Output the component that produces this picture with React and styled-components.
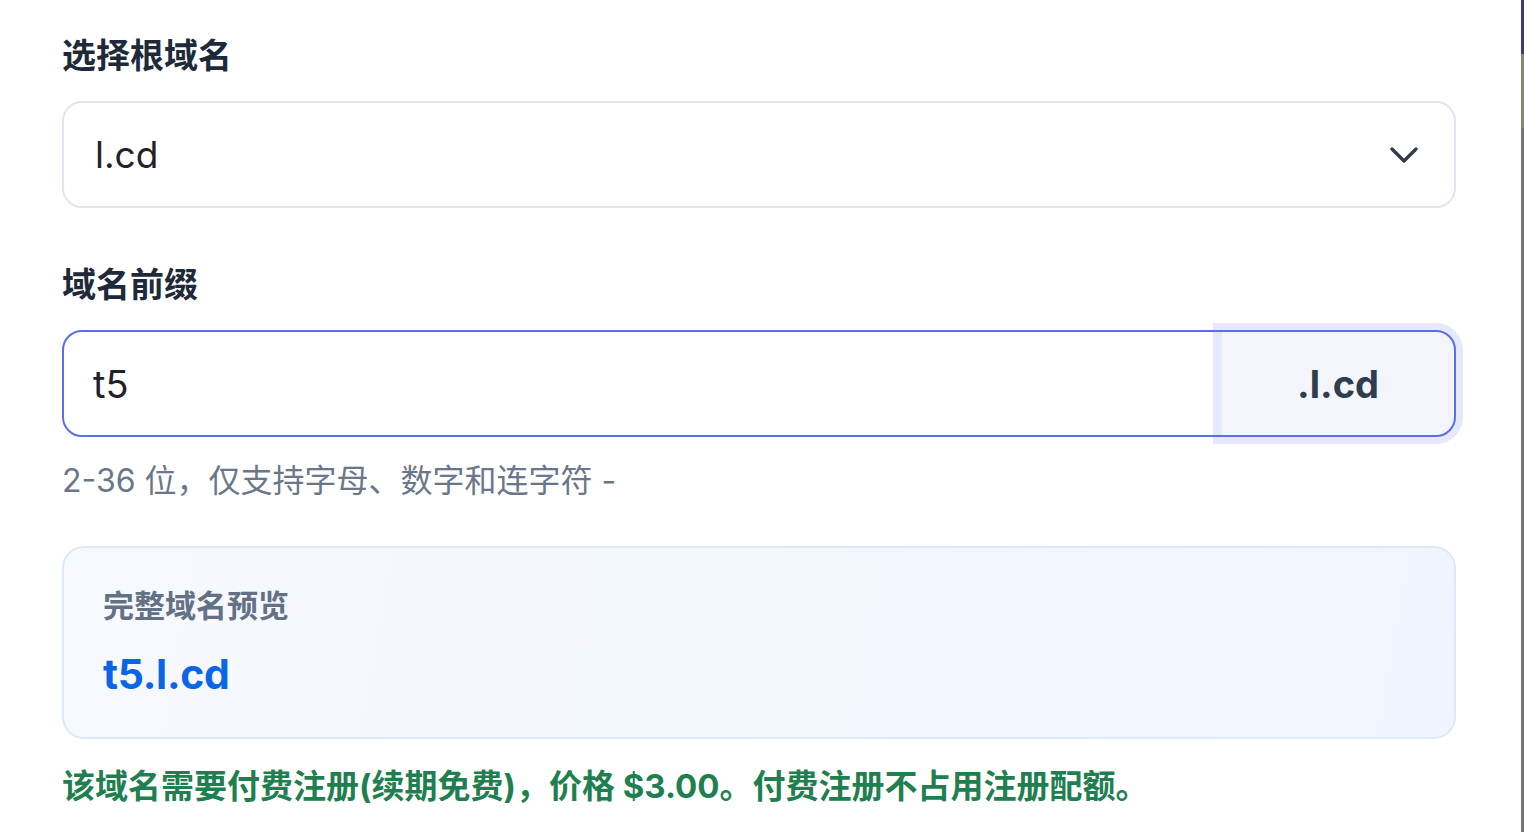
import React, { useState } from 'react';
import styled, { createGlobalStyle } from 'styled-components';

const GlobalStyle = createGlobalStyle`
  html, body {
    margin: 0;
    padding: 0;
    background: #ffffff;
  }
  body {
    font-family: Inter, "Noto Sans CJK SC", sans-serif;
  }
`;

const FONT = 'Inter, "Noto Sans CJK SC", sans-serif';

// styled components
const Page = styled.div`
  display: flex;
  min-height: 832px;
  width: 1524px;
  overflow: hidden;
`;

const Form = styled.section`
  flex: 1;
  display: flex;
  flex-direction: column;
  padding: 31px 65px 0 62px;
`;

const EdgeStrip = styled.div`
  width: 3px;
  flex-shrink: 0;
  background: linear-gradient(
    to bottom,
    #3d3a6e 0,
    #3d3a6e 54px,
    #8b8672 54px,
    #8b8672 128px,
    #727275 128px
  );
`;

const Field = styled.div`
  display: flex;
  flex-direction: column;
  margin-bottom: ${p => p.$gap || 0}px;
`;

const Label = styled.label`
  font-family: ${FONT};
  font-size: 34px;
  line-height: 50px;
  font-weight: 700;
  color: #1e2a3a;
  margin-bottom: ${p => p.$gap || 20}px;
`;

const SelectBox = styled.div`
  height: 107px;
  box-sizing: border-box;
  border: 2px solid #dfe6f0;
  border-radius: 20px;
  display: flex;
  align-items: center;
  justify-content: space-between;
  padding: 0 36px 0 31px;
  background: #fff;
  cursor: pointer;
`;

const SelectValue = styled.span`
  font-family: ${FONT};
  font-size: 37px;
  color: #1f2328;
`;

const InputGroup = styled.div`
  position: relative;
  height: 107px;
  display: flex;
  border-radius: 20px;
  background: #fff;

  &::after {
    content: '';
    position: absolute;
    inset: 0;
    border: 2px solid #5b6fe8;
    border-radius: 20px;
    pointer-events: none;
  }
`;

const TextInput = styled.input`
  flex: 1;
  min-width: 0;
  border: none;
  outline: none;
  background: transparent;
  border-radius: 20px 0 0 20px;
  padding: 0 31px;
  font-family: ${FONT};
  font-size: 38px;
  color: #1f2328;
`;

const Suffix = styled.span`
  width: 232px;
  margin: 2px 2px 2px 0;
  display: flex;
  align-items: center;
  justify-content: center;
  background: #f4f5fa;
  border-radius: 0 18px 18px 0;
  box-shadow: 0 0 0 9px #e6e9fc;
  font-family: ${FONT};
  font-size: 38px;
  font-weight: 700;
  color: #2e3d50;
`;

const Hint = styled.p`
  margin: 20px 0 41px;
  font-family: ${FONT};
  font-size: 32px;
  line-height: 48px;
  color: #6b7789;
`;

const PreviewCard = styled.div`
  box-sizing: border-box;
  height: 193px;
  border: 2px solid #dde8fb;
  border-radius: 22px;
  background: linear-gradient(100deg, #f6f9fe 0%, #eff5fe 100%);
  padding: 36px 40px 0 39px;
  display: flex;
  flex-direction: column;
  gap: 18px;
`;

const PreviewLabel = styled.span`
  font-family: ${FONT};
  font-size: 31px;
  line-height: 44px;
  font-weight: 600;
  color: #647185;
`;

const PreviewValue = styled.span`
  font-family: ${FONT};
  font-size: 41px;
  line-height: 56px;
  font-weight: 700;
  letter-spacing: -0.3px;
  color: #0a66e4;
`;

const Notice = styled.p`
  margin: 23px 0 0;
  font-family: ${FONT};
  font-size: 33px;
  line-height: 48px;
  font-weight: 700;
  color: #1f7f50;
`;

const Chevron = () => (
  <svg width="28" height="16" viewBox="0 0 28 16" fill="none">
    <path d="M2 2l12 12L26 2" stroke="#333d48" strokeWidth="3.4" strokeLinecap="round" strokeLinejoin="round" />
  </svg>
);

const App = () => {
  const [root] = useState('l.cd');
  const [prefix, setPrefix] = useState('t5');

  return (
    <>
      <GlobalStyle />
      <Page>
        <Form>
          <Field $gap={52}>
            <Label $gap={20}>选择根域名</Label>
            <SelectBox>
              <SelectValue>{root}</SelectValue>
              <Chevron />
            </SelectBox>
          </Field>
          <Field>
            <Label>域名前缀</Label>
            <InputGroup>
              <TextInput value={prefix} onChange={e => setPrefix(e.target.value)} />
              <Suffix>.{root}</Suffix>
            </InputGroup>
          </Field>
          <Hint>2-36 位，仅支持字母、数字和连字符 -</Hint>
          <PreviewCard>
            <PreviewLabel>完整域名预览</PreviewLabel>
            <PreviewValue>{prefix}.{root}</PreviewValue>
          </PreviewCard>
          <Notice>该域名需要付费注册(续期免费)，价格 $3.00。付费注册不占用注册配额。</Notice>
        </Form>
        <EdgeStrip />
      </Page>
    </>
  );
};

export default App;
